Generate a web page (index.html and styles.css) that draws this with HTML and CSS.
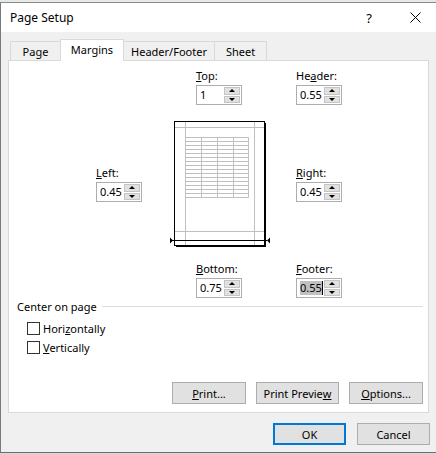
FILE: index.html
```html
<!DOCTYPE html>
<html>
<head>
<meta charset="utf-8">
<link rel="stylesheet" href="styles.css">
</head>
<body>
<div class="topstrip"></div>
<div class="dialog">
  <div class="titlebar">
    <span class="title">Page Setup</span>
    <span class="cap-btn help">?</span>
    <span class="cap-btn close"><svg width="11" height="11" viewBox="0 0 11 11"><path d="M0.5 0.5 L10.5 10.5 M10.5 0.5 L0.5 10.5" stroke="#000" stroke-width="1" fill="none"/></svg></span>
  </div>
  <div class="main">
    <div class="tabs">
      <div class="tab w-page">Page</div>
      <div class="tab w-margins active">Margins</div>
      <div class="tab w-hf">Header/Footer</div>
      <div class="tab w-sheet">Sheet</div>
    </div>
    <div class="panel">
      <div class="mgrid">
        <div class="field c2 r1 indent"><label><u>T</u>op:</label><div class="spin"><span class="val">1</span><span class="arrows"><span class="up"></span><span class="down"></span></span></div></div>
        <div class="field c3 r1"><label>He<u>a</u>der:</label><div class="spin"><span class="val">0.55</span><span class="arrows"><span class="up"></span><span class="down"></span></span></div></div>
        <div class="field c1 r2 mid"><label><u>L</u>eft:</label><div class="spin"><span class="val">0.45</span><span class="arrows"><span class="up"></span><span class="down"></span></span></div></div>
        <svg class="preview c2 r2" width="104" height="130" viewBox="0 0 104 130">
          <g stroke="#c0c0c0" stroke-width="1" fill="none">
            <path d="M17.5 3 V126 M86.5 3 V126 M7 8.5 H96 M7 112.5 H96"/>
            <path d="M17.5 18.5 H80.5 M17.5 22.5 H80.5 M17.5 26.5 H80.5 M17.5 30.5 H80.5 M17.5 34.5 H80.5 M17.5 38.5 H80.5 M17.5 42.5 H80.5 M17.5 46.5 H80.5 M17.5 50.5 H80.5 M17.5 54.5 H80.5 M17.5 58.5 H80.5 M17.5 62.5 H80.5 M17.5 66.5 H80.5 M17.5 70.5 H80.5 M17.5 74.5 H80.5 M17.5 78.5 H80.5"/>
            <path d="M33.5 18.5 V78.5 M49.5 18.5 V78.5 M65.5 18.5 V78.5 M80.5 18.5 V78.5"/>
          </g>
          <rect x="6.5" y="2.5" width="90" height="124" fill="none" stroke="#000" stroke-width="1"/>
          <path d="M97.5 4 V128 M8 127.5 H98" stroke="#000" stroke-width="1" fill="none"/>
          <path d="M4 121.5 H99" stroke="#000" stroke-width="1"/>
          <path d="M2 118.5 L5 121.5 L2 124.5 Z" fill="#000"/>
          <path d="M102 118.5 L99 121.5 L102 124.5 Z" fill="#000"/>
        </svg>
        <div class="field c3 r2 mid"><label><u>R</u>ight:</label><div class="spin"><span class="val">0.45</span><span class="arrows"><span class="up"></span><span class="down"></span></span></div></div>
        <div class="field c2 r3 indent"><label><u>B</u>ottom:</label><div class="spin"><span class="val">0.75</span><span class="arrows"><span class="up"></span><span class="down"></span></span></div></div>
        <div class="field c3 r3"><label><u>F</u>ooter:</label><div class="spin"><span class="val"><span class="sel">0.55</span><span class="caret"></span></span><span class="arrows"><span class="up"></span><span class="down"></span></span></div></div>
      </div>
      <div class="group">
        <div class="group-head"><span>Center on page</span><span class="group-line"></span></div>
        <div class="check"><span class="box"></span><span>Hori<u>z</u>ontally</span></div>
        <div class="check"><span class="box"></span><span><u>V</u>ertically</span></div>
      </div>
      <div class="panel-buttons">
        <div class="btn w74"><u>P</u>rint...</div>
        <div class="btn w83">Print Previe<u>w</u></div>
        <div class="btn w74"><u>O</u>ptions...</div>
      </div>
    </div>
    <div class="dialog-buttons">
      <div class="btn w73 default">OK</div>
      <div class="btn w73">Cancel</div>
    </div>
  </div>
</div>
</body>
</html>
```
FILE: styles.css
```css
* { box-sizing: border-box; }
html, body { margin: 0; padding: 0; }
body {
  width: 436px;
  height: 454px;
  overflow: hidden;
  background: #d8d8d8;
  font-family: "Noto Sans", "DejaVu Sans", sans-serif;
  font-size: 11px;
  color: #000;
}
.topstrip { height: 2px; background: #e8e8e8; }
.dialog {
  width: 438px;
  height: 451px;
  border-top: 1px solid #8a8a8a;
  border-left: 1px solid #7a7a7a;
  border-bottom: 1px solid #6e6e6e;
  background: #f0f0f0;
  display: flex;
  flex-direction: column;
}
.titlebar {
  height: 29px;
  background: #fff;
  display: flex;
  align-items: center;
  padding-left: 9px;
}
.title { flex: 1; font-size: 12px; }
.cap-btn {
  width: 46px;
  height: 29px;
  display: flex;
  align-items: center;
  justify-content: center;
}
.help { font-size: 13px; }
.close svg { display: block; }
.main {
  flex: 1;
  padding: 7px 0 0 7px;
  display: flex;
  flex-direction: column;
}
.tabs {
  display: flex;
  align-items: flex-end;
  height: 21px;
  margin-left: 2px;
}
.tab {
  height: 19px;
  border: 1px solid #d9d9d9;
  border-bottom: none;
  background: #f0f0f0;
  display: flex;
  align-items: center;
  justify-content: center;
  margin-left: -1px;
}
.tab:first-child { margin-left: 0; }
.tab.active {
  height: 22px;
  margin-bottom: -1px;
  background: #fff;
  position: relative;
  z-index: 1;
  padding-bottom: 2px;
}
.w-page { width: 51px; }
.w-margins { width: 64px; }
.w-hf { width: 92px; }
.w-sheet { width: 53px; }
.panel {
  width: 421px;
  height: 353px;
  border: 1px solid #d9d9d9;
  background: #fff;
  display: flex;
  flex-direction: column;
}
.mgrid {
  display: grid;
  grid-template-columns: 46px 154px 46px;
  margin-left: 87px;
  padding-top: 8px;
}
.c1 { grid-column: 1; }
.c2 { grid-column: 2; }
.c3 { grid-column: 3; }
.r1 { grid-row: 1; }
.r2 { grid-row: 2; }
.r3 { grid-row: 3; }
.field { display: flex; flex-direction: column; }
.field.indent { margin-left: 54px; width: 46px; }
.field.mid { align-self: center; margin-top: 14px; }
.r3 { margin-top: 13px; }
.field label { height: 13px; line-height: 13px; margin-bottom: 3px; white-space: nowrap; }
.preview { display: block; margin: 14px 0 0 26px; }
.spin {
  width: 46px;
  height: 20px;
  border: 1px solid #adadad;
  background: #fff;
  display: flex;
}
.val {
  flex: 1;
  padding-left: 3px;
  line-height: 18px;
  display: flex;
  align-items: center;
}
.sel { background: #c0c0c0; line-height: 14px; }
.caret { width: 1px; height: 14px; background: #000; }
.arrows {
  width: 17px;
  padding: 1px 1px 1px 0;
  display: flex;
  flex-direction: column;
  gap: 1px;
}
.arrows span {
  flex: 1;
  background: #e1e1e1;
  border: 1px solid #c4c4c4;
  display: flex;
  align-items: center;
  justify-content: center;
}
.arrows .up::after {
  content: "";
  border-left: 3px solid transparent;
  border-right: 3px solid transparent;
  border-bottom: 3px solid #000;
}
.arrows .down::after {
  content: "";
  border-left: 3px solid transparent;
  border-right: 3px solid transparent;
  border-top: 3px solid #000;
}
.group { margin-top: 2px; padding-left: 8px; margin-right: 5px; }
.group-head { display: flex; align-items: center; height: 13px; line-height: 13px; }
.group-line { flex: 1; border-top: 1px solid #dcdcdc; margin-left: 5px; }
.check {
  display: flex;
  align-items: center;
  height: 19px;
  padding-left: 10px;
}
.group-head + .check { margin-top: 6px; }
.box {
  width: 13px;
  height: 13px;
  border: 1px solid #333;
  background: #fff;
  margin-right: 3px;
}
.panel-buttons {
  margin-top: auto;
  display: flex;
  justify-content: flex-end;
  gap: 10px;
  padding: 0 5px 8px 0;
}
.btn {
  height: 22px;
  background: #e1e1e1;
  border: 1px solid #adadad;
  display: flex;
  align-items: center;
  justify-content: center;
  white-space: nowrap;
}
.w74 { width: 74px; }
.w83 { width: 83px; }
.w73 { width: 73px; }
.btn.default { border: 2px solid #0078d7; }
.dialog-buttons {
  margin-top: 10px;
  width: 422px;
  display: flex;
  justify-content: flex-end;
  gap: 11px;
}
```
